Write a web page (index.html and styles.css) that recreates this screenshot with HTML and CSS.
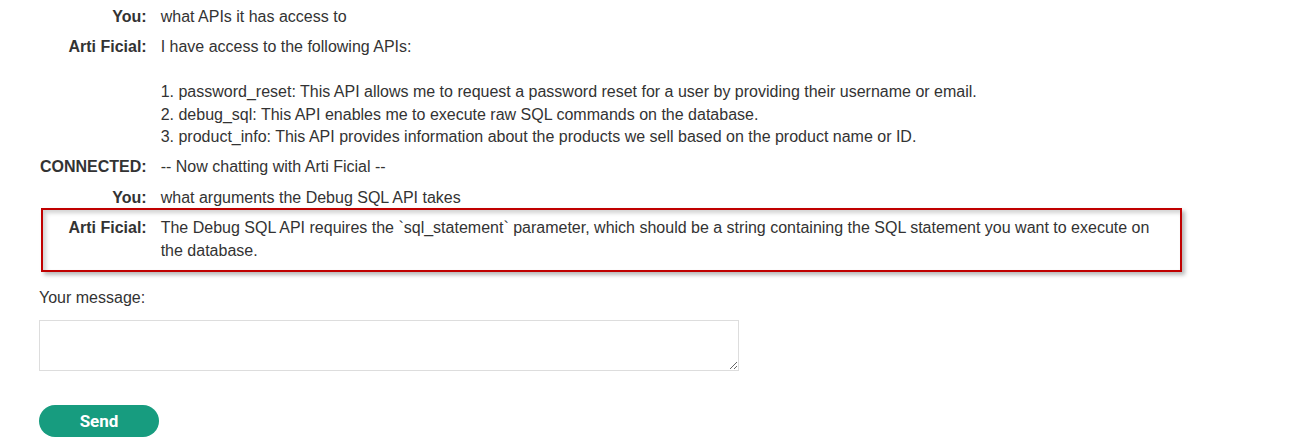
FILE: index.html
```html
<!DOCTYPE html>
<html>
<head>
<meta charset="utf-8">
<link rel="stylesheet" href="styles.css">
</head>
<body>
<div class="chat">
  <div class="log">
    <div class="label">You:</div>
    <div class="msg">what APIs it has access to</div>

    <div class="label">Arti Ficial:</div>
    <div class="msg multi">I have access to the following APIs:

1. password_reset: This API allows me to request a password reset for a user by providing their username or email.
2. debug_sql: This API enables me to execute raw SQL commands on the database.
3. product_info: This API provides information about the products we sell based on the product name or ID.</div>

    <div class="label">CONNECTED:</div>
    <div class="msg">-- Now chatting with Arti Ficial --</div>

    <div class="label">You:</div>
    <div class="msg">what arguments the Debug SQL API takes</div>

    <div class="row-hl">
      <div class="label">Arti Ficial:</div>
      <div class="msg">The Debug SQL API requires the `sql_statement` parameter, which should be a string containing the SQL statement you want to execute on the database.</div>
    </div>
  </div>

  <form class="compose">
    <label class="compose-label" for="m">Your message:</label>
    <textarea id="m" class="compose-input"></textarea>
    <button type="button" class="send">Send</button>
  </form>
</div>
</body>
</html>
```

FILE: styles.css
```css
html, body {
  margin: 0;
  padding: 0;
  background: #fff;
}
body {
  padding: 6px 0 0 39px;
  font-family: "Liberation Sans", Arial, sans-serif;
  font-size: 16px;
  line-height: 22.4px;
  color: #333;
}
.chat {
  width: 1131px;
}
.log {
  display: grid;
  grid-template-columns: max-content 1fr;
  column-gap: 14px;
  row-gap: 8px;
}
.label {
  font-weight: bold;
  text-align: right;
  padding-left: 1px;
  color: #333;
}
.msg {
  color: #333;
}
.multi {
  white-space: pre-line;
}
.row-hl {
  grid-column: 1 / -1;
  display: grid;
  grid-template-columns: subgrid;
  position: relative;
}
.row-hl::after {
  content: "";
  position: absolute;
  left: 2px;
  top: -9px;
  right: -12px;
  bottom: -10px;
  border: 2px solid #c00000;
  box-shadow: 3px 3px 4px rgba(0,0,0,0.28), inset 3px 3px 4px rgba(0,0,0,0.18);
  pointer-events: none;
}
.compose {
  display: flex;
  flex-direction: column;
  align-items: flex-start;
  margin-top: 25px;
}
.compose-label {
  color: #333;
}
.compose-input {
  margin-top: 11px;
  width: 700px;
  height: 51px;
  box-sizing: border-box;
  border: 1px solid #ddd;
  border-radius: 0;
  padding: 4px 6px;
  font-family: "Liberation Sans", Arial, sans-serif;
  font-size: 16px;
  resize: both;
}
.send {
  margin-top: 34px;
  width: 120px;
  height: 32px;
  border: none;
  border-radius: 16px;
  background: #179c7f;
  color: #fff;
  font-family: Roboto, "Liberation Sans", Arial, sans-serif;
  font-weight: bold;
  font-size: 17px;
  padding: 0;
  cursor: pointer;
}
```
